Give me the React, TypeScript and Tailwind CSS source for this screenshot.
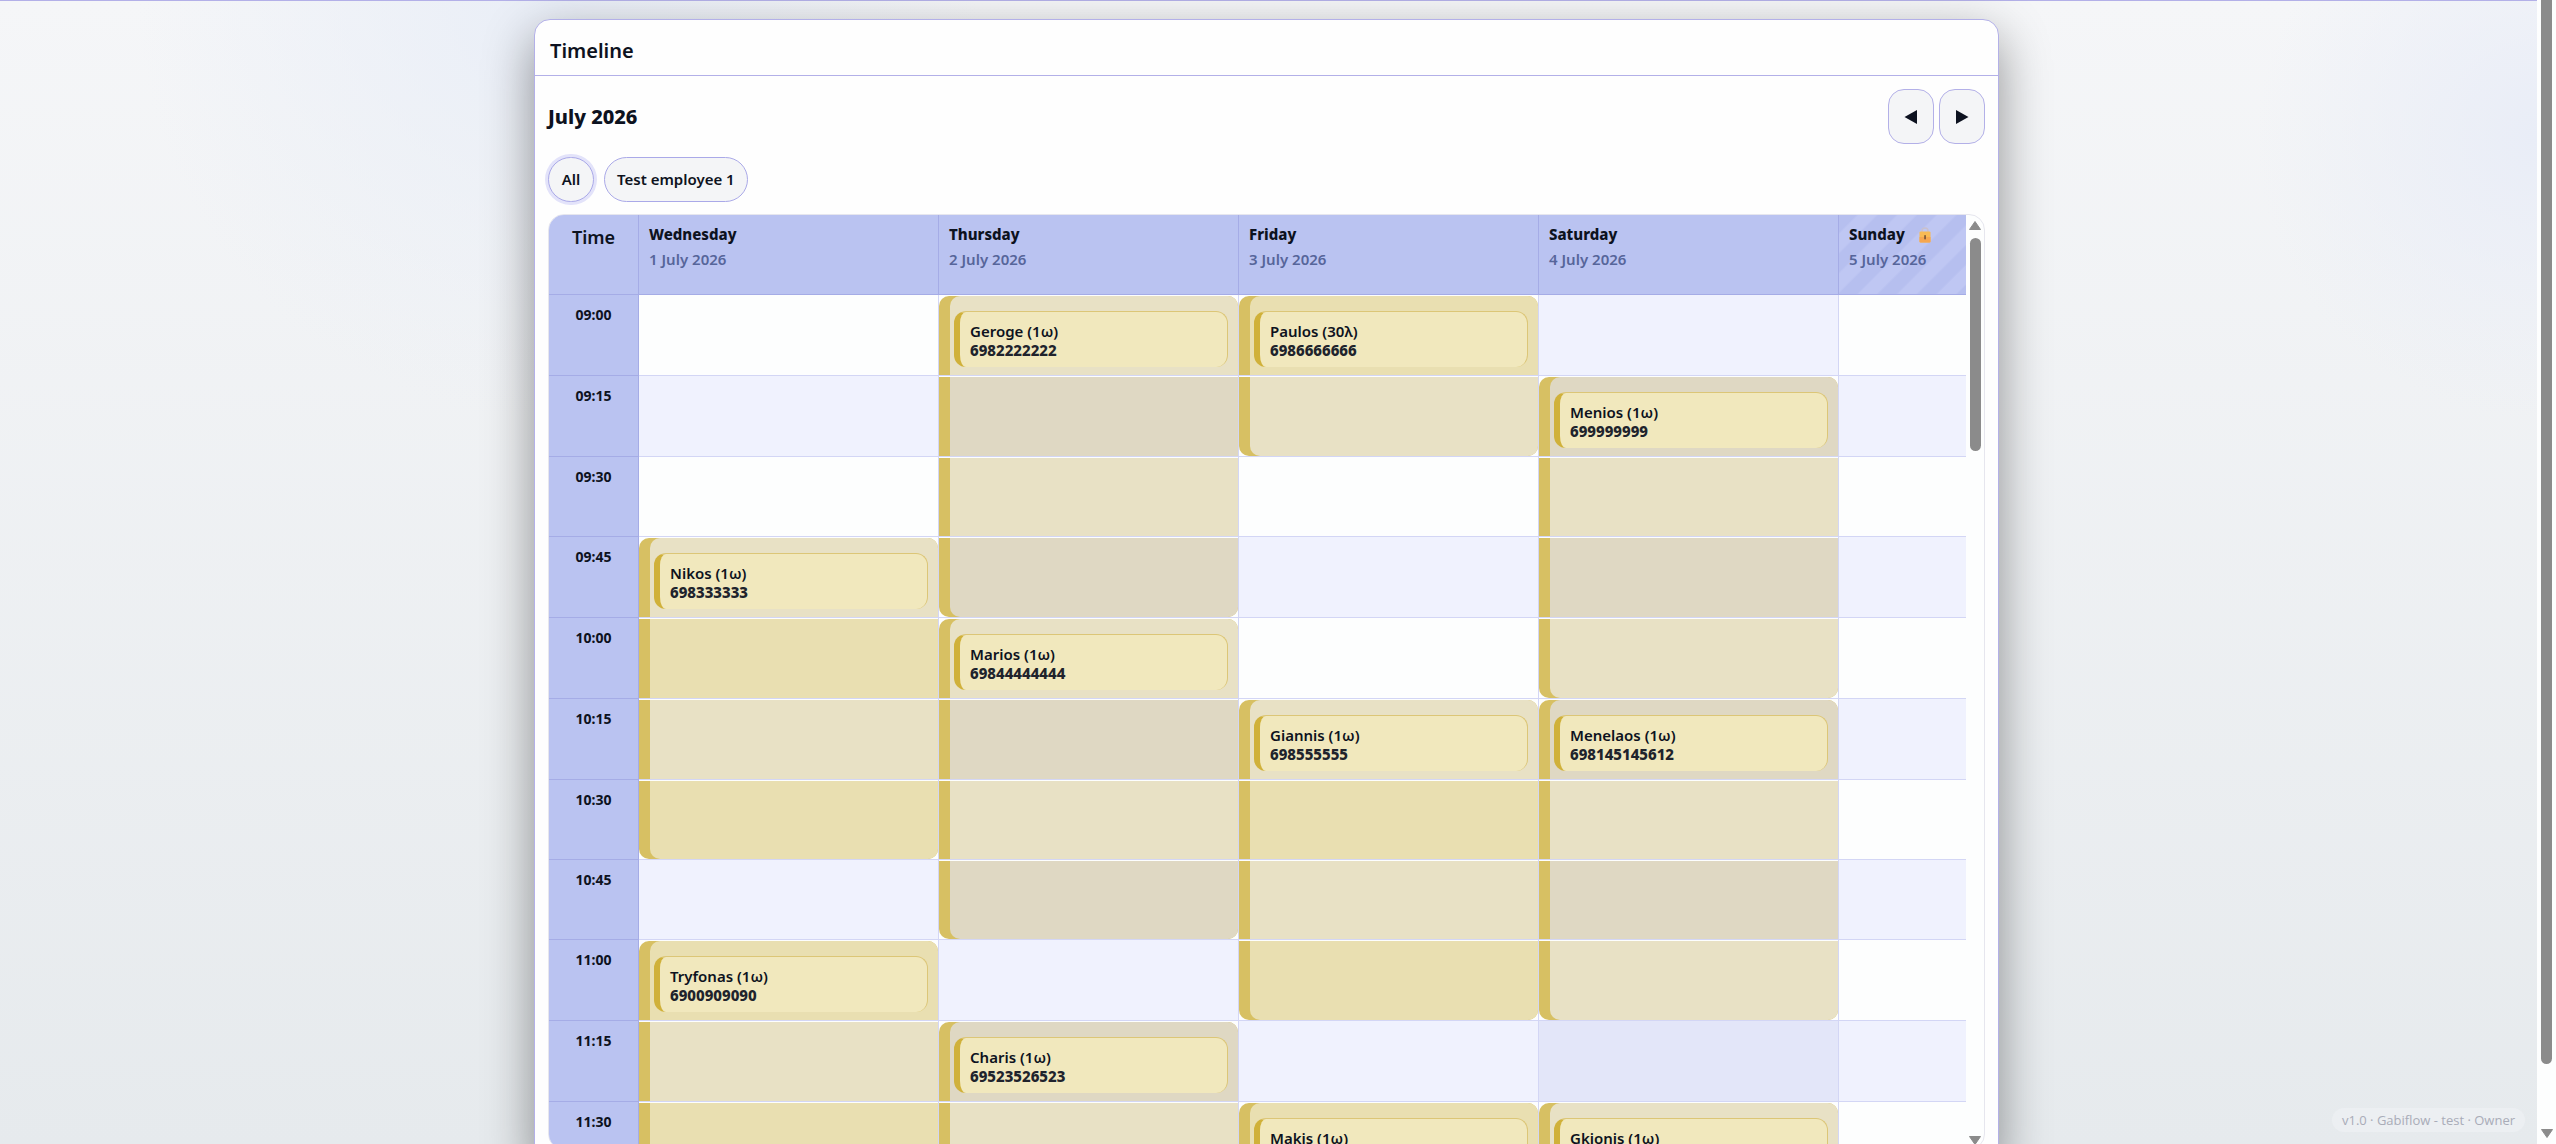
import React from "react";

type Tone = "w" | "t" | "d" | "A" | "B" | "C";

const TONE: Record<Tone, string> = {
  w: "bg-[#fdfefe]",
  t: "bg-[#f0f2fe]",
  d: "bg-[#e3e6f9]",
  A: "bg-[#e8e1c5]",
  B: "bg-[#e9dfb1]",
  C: "bg-[#dfd8c3]",
};

const TIMES = ["09:00", "09:15", "09:30", "09:45", "10:00", "10:15", "10:30", "10:45", "11:00", "11:15", "11:30"];

interface Booking {
  start: number;
  length: number;
  name: string;
  phone?: string;
}

interface Day {
  name: string;
  date: string;
  closed?: boolean;
  tones: string;
  bookings: Booking[];
}

const DAYS: Day[] = [
  {
    name: "Wednesday",
    date: "1 July 2026",
    tones: "wtwABABtBAB",
    bookings: [
      { start: 3, length: 4, name: "Nikos (1ω)", phone: "698333333" },
      { start: 8, length: 4, name: "Tryfonas (1ω)", phone: "6900909090" },
    ],
  },
  {
    name: "Thursday",
    date: "2 July 2026",
    tones: "ACACACACtCA",
    bookings: [
      { start: 0, length: 4, name: "Geroge (1ω)", phone: "6982222222" },
      { start: 4, length: 4, name: "Marios (1ω)", phone: "69844444444" },
      { start: 9, length: 4, name: "Charis (1ω)", phone: "69523526523" },
    ],
  },
  {
    name: "Friday",
    date: "3 July 2026",
    tones: "BAwtwABABtB",
    bookings: [
      { start: 0, length: 2, name: "Paulos (30λ)", phone: "6986666666" },
      { start: 5, length: 4, name: "Giannis (1ω)", phone: "698555555" },
      { start: 10, length: 4, name: "Makis (1ω)" },
    ],
  },
  {
    name: "Saturday",
    date: "4 July 2026",
    tones: "tCACACACAdA",
    bookings: [
      { start: 1, length: 4, name: "Menios (1ω)", phone: "699999999" },
      { start: 5, length: 4, name: "Menelaos (1ω)", phone: "698145145612" },
      { start: 10, length: 4, name: "Gkionis (1ω)" },
    ],
  },
  { name: "Sunday", date: "5 July 2026", closed: true, tones: "wtwtwtwtwtw", bookings: [] },
];

const hasStart = (row: number) => DAYS.some((d) => d.bookings.some((b) => b.start === row));

function LockIcon() {
  return (
    <svg viewBox="0 0 12 16" className="h-4 w-3 shrink-0" role="img" aria-label="Closed">
      <path d="M3 6V4a3 3 0 0 1 6 0V6" fill="none" stroke="#c9c0cc" strokeWidth="1.5" />
      <rect x="0.5" y="4.500" width="11" height="11" rx="1" fill="#f8ba55" />
      <path d="M.5 10h11v4.500a1 1 0 0 1-1 1h-9a1 1 0 0 1-1-1Z" fill="#f6a650" />
      <rect x="5.300" y="8" width="1.500" height="4.500" rx=".7" fill="#6b4a33" />
    </svg>
  );
}

function Slot({ day, row }: { day: Day; row: number }) {
  const tone = TONE[day.tones[row] as Tone];
  const booking = day.bookings.find((b) => row >= b.start && row < b.start + b.length);
  if (!booking) {
    return <td className={`border-r border-b border-[#d3d6f5] p-0 ${tone}`} />;
  }
  const first = row === booking.start;
  const last = row === booking.start + booking.length - 1;
  return (
    <td className="border-r border-b border-[#d3d6f5] bg-[#fdfefe] p-0 pt-px align-top">
      <div className={`h-full overflow-hidden bg-[#d7c063] pl-[11px] ${first ? "rounded-t-[10px]" : ""} ${last ? "rounded-b-[10px]" : ""}`}>
        <div className={`h-full pt-[15px] pr-2.5 pl-1 ${tone} ${first ? "rounded-tl-[10px]" : ""} ${last ? "rounded-bl-[10px]" : ""}`}>
          {first && (
            <div className="h-14 rounded-xl border-t border-r border-l-[6px] border-t-[#dcc677] border-r-[#dcc677] border-l-[#d0b13a] bg-[#f1e8bd] pt-2.5 pl-2.5 text-[15px] leading-[19px]">
              <div className="font-semibold text-[#0d1220]">{booking.name}</div>
              {booking.phone && <div className="font-extrabold text-[#20232c]">{booking.phone}</div>}
            </div>
          )}
        </div>
      </div>
    </td>
  );
}

const NAV = "grid h-[55px] w-[46px] place-items-center rounded-2xl border border-[#b3b0e8] bg-[#f4f5f7]";
const PILL = "h-[45px] rounded-full border border-[#aaa9e8] bg-[#f4f5f7] text-[15px] font-semibold text-[#0d1220]";

export default function App() {
  return (
    <div className="flex h-screen overflow-hidden font-['Noto_Sans','Open_Sans',sans-serif] text-[#0d1220]">
      <div className="relative flex min-w-0 flex-1 items-start justify-center border-t border-[#b3b0e8] bg-[radial-gradient(circle_at_100%_12%,#e9edf7_0,transparent_280px),radial-gradient(circle_at_22%_0%,#e9eef7_0,transparent_420px),linear-gradient(to_bottom,#f5f6f8,#e6eaed)] pt-[18px] pr-1">
        <main className="w-full max-w-[1465px] rounded-2xl border border-[#b3b0e8] bg-[#fefefe] shadow-[0_18px_50px_rgba(0,0,0,0.42)]">
          <header className="flex h-14 items-center border-b border-[#b3b0e8] px-[15px]">
            <h1 className="pt-1.5 text-xl leading-7 font-semibold">Timeline</h1>
          </header>
          <div className="px-[13px] pt-[13px] pb-3">
            <div className="flex items-center justify-between">
              <h2 className="text-xl leading-7 font-extrabold">July 2026</h2>
              <div className="flex gap-[5px]">
                <button className={NAV} aria-label="Previous month">
                  <svg viewBox="0 0 14 14" className="size-3.5"><path d="M0.500 7 13 0v14Z" fill="#0d1220" /></svg>
                </button>
                <button className={NAV} aria-label="Next month">
                  <svg viewBox="0 0 14 14" className="size-3.5"><path d="M13.500 7 1 0v14Z" fill="#0d1220" /></svg>
                </button>
              </div>
            </div>
            <div className="mt-[13px] flex gap-2.5">
              <button className={`${PILL} w-[46px] shadow-[0_0_0_3px_#e3e3fa]`}>All</button>
              <button className={`${PILL} px-3`}>Test employee 1</button>
            </div>
            <div className="mt-3 flex h-[936px] overflow-hidden rounded-2xl border border-[#e6e6ee] bg-[#fdfefe]">
              <div className="min-w-0 flex-1 overflow-hidden">
                <table className="h-px w-[1590px] table-fixed border-separate border-spacing-0">
                  <colgroup>
                    <col className="w-[90px]" />
                    {DAYS.map((d) => (
                      <col key={d.name} className="w-[300px]" />
                    ))}
                  </colgroup>
                  <thead>
                    <tr className="h-20">
                      <th className="border-r border-b border-[#a5ace6] bg-[#bac3f1] pt-2 align-top text-lg leading-7 font-semibold">Time</th>
                      {DAYS.map((d) => (
                        <th
                          key={d.name}
                          className={`border-r border-b border-[#a5ace6] px-2.5 pt-[7px] text-left align-top text-[15px] leading-[25px] ${
                            d.closed
                              ? "bg-[repeating-linear-gradient(135deg,#b6bfef_0,#b6bfef_12px,#bfc7f3_14px,#bfc7f3_26px,#b6bfef_28px)]"
                              : "bg-[#bac3f1]"
                          }`}
                        >
                          <div className="flex items-center gap-3.5 font-extrabold">
                            {d.name}
                            {d.closed && <LockIcon />}
                          </div>
                          <div className="font-semibold text-[#56659a]">{d.date}</div>
                        </th>
                      ))}
                    </tr>
                  </thead>
                  <tbody>
                    {TIMES.map((t, row) => (
                      <tr key={t} className={hasStart(row) ? "h-[81px]" : "h-20"}>
                        <th className="border-r border-b border-[#a5ace6] bg-[#bac3f1] pt-2.5 align-top text-sm leading-5 font-bold">{t}</th>
                        {DAYS.map((d) => (
                          <Slot key={d.name} day={d} row={row} />
                        ))}
                      </tr>
                    ))}
                  </tbody>
                </table>
              </div>
              <div className="flex w-[18px] flex-col items-center pt-1.5 pb-1">
                <svg viewBox="0 0 12 9" className="h-[9px] w-3"><path d="M6 0.500 11.500 8.500H0.500Z" fill="#8b8b8b" stroke="#8b8b8b" strokeLinejoin="round" /></svg>
                <div className="mt-2 h-[213px] w-[11px] rounded-full bg-[#8b8b8b]" />
                <svg viewBox="0 0 12 9" className="mt-auto h-[9px] w-3"><path d="M6 8.500 11.500 0.500H0.500Z" fill="#8b8b8b" stroke="#8b8b8b" strokeLinejoin="round" /></svg>
              </div>
            </div>
          </div>
        </main>
        <footer className="absolute right-3 bottom-3 rounded-full bg-[#eceff2] px-2.5 font-['Open_Sans',sans-serif] text-[13px] leading-6 text-[#a9acb8]">
          v1.0 · Gabiflow - test · Owner
        </footer>
      </div>
      <div className="flex w-[19px] flex-col items-center bg-[#fdfefe] pb-1.5">
        <div className="h-[1064px] w-[11px] rounded-b-full bg-[#8b8b8b]" />
        <svg viewBox="0 0 12 9" className="mt-auto h-[9px] w-3"><path d="M6 8.500 11.500 0.500H0.500Z" fill="#8b8b8b" stroke="#8b8b8b" strokeLinejoin="round" /></svg>
      </div>
    </div>
  );
}
